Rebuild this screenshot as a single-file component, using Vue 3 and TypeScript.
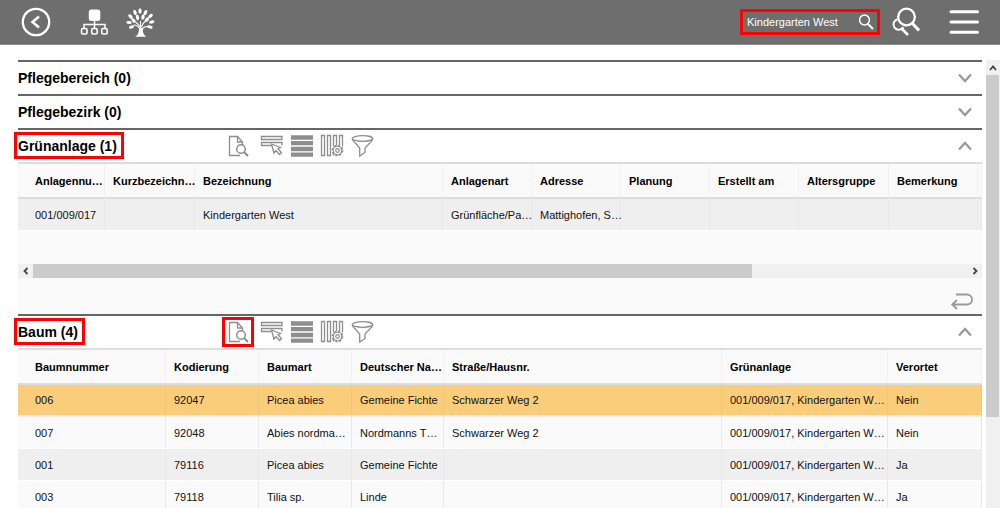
<script setup lang="ts">
import { ref } from 'vue'

interface Column {
  label: string
  width?: number
}
interface Section {
  id: string
  title: string
  count: number
  open: boolean
  marked?: boolean
  markedTool?: boolean
  columns: Column[]
  rows: string[][]
  selected?: number
  scroller?: boolean
}

const query = ref('Kindergarten West')

const sections = ref<Section[]>([
  { id: 'bereich', title: 'Pflegebereich', count: 0, open: false, columns: [], rows: [] },
  { id: 'bezirk', title: 'Pflegebezirk', count: 0, open: false, columns: [], rows: [] },
  {
    id: 'gruenanlage',
    title: 'Grünanlage',
    count: 1,
    open: true,
    marked: true,
    scroller: true,
    columns: [
      { label: 'Anlagennu…', width: 87 },
      { label: 'Kurzbezeichn…', width: 90 },
      { label: 'Bezeichnung' },
      { label: 'Anlagenart', width: 89 },
      { label: 'Adresse', width: 89 },
      { label: 'Planung', width: 89 },
      { label: 'Erstellt am', width: 89 },
      { label: 'Altersgruppe', width: 90 },
      { label: 'Bemerkung', width: 89 },
      { label: '', width: 4 },
    ],
    rows: [['001/009/017', '', 'Kindergarten West', 'Grünfläche/Pa…', 'Mattighofen, S…', '', '', '', '', '']],
  },
  {
    id: 'baum',
    title: 'Baum',
    count: 4,
    open: true,
    marked: true,
    markedTool: true,
    selected: 0,
    columns: [
      { label: 'Baumnummer', width: 148 },
      { label: 'Kodierung', width: 93 },
      { label: 'Baumart', width: 93 },
      { label: 'Deutscher Na…', width: 92 },
      { label: 'Straße/Hausnr.' },
      { label: 'Grünanlage', width: 166 },
      { label: 'Verortet', width: 94 },
    ],
    rows: [
      ['006', '92047', 'Picea abies', 'Gemeine Fichte', 'Schwarzer Weg 2', '001/009/017, Kindergarten W…', 'Nein'],
      ['007', '92048', 'Abies nordma…', 'Nordmanns T…', 'Schwarzer Weg 2', '001/009/017, Kindergarten W…', 'Nein'],
      ['001', '79116', 'Picea abies', 'Gemeine Fichte', '', '001/009/017, Kindergarten W…', 'Ja'],
      ['003', '79118', 'Tilia sp.', 'Linde', '', '001/009/017, Kindergarten W…', 'Ja'],
    ],
  },
])

const tools = [
  { id: 'preview', label: 'Details anzeigen' },
  { id: 'select', label: 'Auswählen' },
  { id: 'rows', label: 'Alle Zeilen' },
  { id: 'columns', label: 'Spalten einstellen' },
  { id: 'filter', label: 'Filtern' },
]

const leaves = [
  [14, 3, 0], [9, 4.5, -20], [19.5, 4.5, 25], [4.5, 8.5, -45], [24.5, 8, 50],
  [11.5, 9.5, -10], [17, 9, 15], [3, 14.5, -85], [7.5, 12.5, -45],
  [21, 11.5, 45], [25.8, 14, 80], [5.5, 19, -105], [24, 19, 100],
]
</script>

<template>
  <div class="app">
    <header class="topbar">
      <button class="icon-button back" aria-label="Zurück">
        <svg width="30" height="30" viewBox="0 0 30 30" fill="none" stroke="currentColor">
          <circle cx="15" cy="15" r="13.2" stroke-width="2.3" />
          <path d="M18 9.5 11.5 15l6.500 5.500" stroke-width="2.6" />
        </svg>
      </button>
      <button class="icon-button org" aria-label="Struktur">
        <svg width="28" height="28" viewBox="0 0 28 28" fill="none" stroke="currentColor">
          <rect x="8.800" y="1.500" width="11.500" height="11.500" rx="2.500" fill="currentColor" stroke="none" />
          <path d="M14.500 12v8M4 20v-3.500h21V20" stroke-width="1.500" />
          <rect x="1.500" y="20.500" width="5.500" height="5.500" rx="1.500" stroke-width="1.600" />
          <rect x="11.700" y="20.500" width="5.500" height="5.500" rx="1.500" stroke-width="1.600" />
          <rect x="21.700" y="20.500" width="5.500" height="5.500" rx="1.500" stroke-width="1.600" />
        </svg>
      </button>
      <button class="icon-button tree" aria-label="Baumkataster">
        <svg width="29" height="29" viewBox="0 0 29 29" fill="currentColor">
          <ellipse v-for="(l, i) in leaves" :key="i" :cx="l[0]" :cy="l[1]" rx="1.600" ry="2.700"
            :transform="`rotate(${l[2]} ${l[0]} ${l[1]})`" />
          <path d="M13 20C13 24 12.500 27 9 28.700h11.500c-3-1.500-3.700-4-3.700-8.700z" />
          <path d="M14.500 23V13M14.500 22.500C13 18.500 10.500 17 7.500 17M13.800 19C12.500 16.500 11 15 9.500 14M15.500 22.500c1-2.800 3.500-4 6.500-4.200M15.500 19c.8-3 2-4.500 4-6"
            fill="none" stroke="currentColor" stroke-width="1.200" />
        </svg>
      </button>

      <form class="search" role="search" @submit.prevent>
        <input v-model="query" type="text" aria-label="Suche" />
        <button class="icon-button" type="submit" aria-label="Suchen">
          <svg width="16" height="16" viewBox="0 0 16 16" fill="none" stroke="currentColor">
            <circle cx="6.500" cy="6" r="4.900" stroke-width="1.500" />
            <path d="m10 10 5 5" stroke-width="1.900" />
          </svg>
        </button>
      </form>
      <button class="icon-button advanced" aria-label="Erweiterte Suche">
        <svg width="30" height="30" viewBox="0 0 30 30" fill="none" stroke="currentColor">
          <circle cx="16.500" cy="10" r="8.300" stroke-width="2.300" />
          <path d="m22 16 7 7.500" stroke-width="3" />
          <path d="M7.500 12.200a5.400 5.400 0 1 0 6 8" stroke-width="2" />
          <path d="m11 21 7 7" stroke-width="2.600" />
        </svg>
      </button>
      <button class="icon-button" aria-label="Menü">
        <svg width="30" height="26" viewBox="0 0 30 26" fill="none" stroke="currentColor">
          <path d="M2 2.800h26.500M2 13h26.500M2 23.200h26.500" stroke-width="3" stroke-linecap="round" />
        </svg>
      </button>
    </header>

    <div class="body">
      <main class="content">
        <section v-for="s in sections" :key="s.id" class="section">
          <div class="section-head">
            <div class="title-cell">
              <h2 :class="{ marked: s.marked }">{{ s.title }} ({{ s.count }})</h2>
            </div>
            <div v-if="s.open" class="tools">
              <button v-for="t in tools" :key="t.id" class="tool" :aria-label="t.label"
                :class="{ marked: s.markedTool && t.id === 'preview' }">
                <svg width="24" height="24" viewBox="0 0 24 24" fill="none" stroke="currentColor" stroke-width="1.300">
                  <template v-if="t.id === 'preview'">
                    <path d="M14 21.500H3.500v-19h8l5 5.500v3M11.500 2.500V8h5" />
                    <circle cx="15" cy="15" r="4.300" fill="#fff" stroke-width="1.500" />
                    <path d="m18 18 4 4" stroke-width="2" />
                  </template>
                  <template v-else-if="t.id === 'select'">
                    <path d="M1.500 2.500h20.500v3h-20.500zM11.500 11.500h-10v-3h20.500v3" />
                    <path d="m11.500 10 2.500 9 2-2.500 3.500 4 2-1.800-3.500-4 2.500-1.200z" fill="#fff" />
                  </template>
                  <template v-else-if="t.id === 'rows'">
                    <path d="M1 3.500h22M1 9.200h22M1 15h22M1 20.700h22" stroke-width="4.300" />
                  </template>
                  <template v-else-if="t.id === 'columns'">
                    <path d="M1.500 1.500h3v20h-3zM7.500 1.500h3v20h-3zM13.500 12.500v-11h3v9.500M19.500 11v-9.500h3v11M13.500 20v1.500" />
                    <circle cx="17.500" cy="16.500" r="4.300" fill="#fff" stroke-width="1.200" />
                    <circle cx="17.500" cy="16.500" r="5" stroke-width="1.700" stroke-dasharray="2 1.930" />
                    <circle cx="17.500" cy="16.500" r="1.800" stroke-width="1.200" />
                  </template>
                  <template v-else>
                    <ellipse cx="12.500" cy="4.500" rx="10.200" ry="2.800" />
                    <path d="M2.300 4.500c0 2 1.200 2.900 3 4.500l4.400 5v8l5.300-3.500v-4.500l5-5.200c1.700-1.500 2.700-2.300 2.700-4.300" />
                  </template>
                </svg>
              </button>
            </div>
            <button class="toggle" :aria-expanded="s.open" :aria-label="s.title" @click="s.open = !s.open">
              <svg width="16" height="12" viewBox="0 0 16 12" fill="none" stroke="currentColor" stroke-width="2.300">
                <path :d="s.open ? 'm2 9.500 6-6.500 6 6.500' : 'm2 2.500 6 6.500 6-6.500'" />
              </svg>
            </button>
          </div>

          <div v-if="s.open" class="panel">
            <table>
              <colgroup>
                <col v-for="(c, i) in s.columns" :key="i" :style="c.width ? { width: c.width + 'px' } : {}" />
              </colgroup>
              <thead>
                <tr>
                  <th v-for="(c, i) in s.columns" :key="i" scope="col">{{ c.label }}</th>
                </tr>
              </thead>
              <tbody>
                <tr v-for="(r, ri) in s.rows" :key="ri" :class="{ selected: s.selected === ri }">
                  <td v-for="(cell, ci) in r" :key="ci">{{ cell }}</td>
                </tr>
              </tbody>
            </table>
            <template v-if="s.scroller">
              <div class="hscroll">
                <button class="arrow" aria-label="Nach links">
                  <svg width="8" height="8" viewBox="0 0 8 8"><path d="M5.500 1 2.500 4l3 3" /></svg>
                </button>
                <div class="htrack"><div class="hthumb"></div></div>
                <button class="arrow" aria-label="Nach rechts">
                  <svg width="8" height="8" viewBox="0 0 8 8"><path d="m2.500 1 3 3-3 3" /></svg>
                </button>
              </div>
              <div class="panel-foot">
                <button class="return" aria-label="Zurücksetzen">
                  <svg width="24" height="18" viewBox="0 0 24 18" fill="none" stroke="currentColor" stroke-width="1.800">
                    <path d="M6 2.500h11a5 5 0 0 1 0 10H3M7 8l-4.800 4.500L7 17" />
                  </svg>
                </button>
              </div>
            </template>
          </div>
        </section>
      </main>

      <div class="vscroll">
        <button class="arrow" aria-label="Nach oben">
          <svg width="8" height="8" viewBox="0 0 8 8"><path d="m1 6 3-3.500L7 6" /></svg>
        </button>
        <div class="vtrack"><div class="vthumb"></div></div>
      </div>
    </div>
  </div>
</template>

<style>
body {
  margin: 0;
  background: #fff;
}
</style>

<style scoped>
.app {
  display: flex;
  flex-direction: column;
  height: 100vh;
  overflow: hidden;
  font-family: "Liberation Sans", Arial, sans-serif;
  font-size: 11px;
  color: #111;
}
.app * {
  box-sizing: border-box;
}
button {
  display: flex;
  align-items: center;
  justify-content: center;
  padding: 0;
  border: 0;
  background: none;
  color: inherit;
  cursor: pointer;
}
svg {
  display: block;
  flex: none;
}

.topbar {
  display: flex;
  align-items: center;
  flex: none;
  height: 45px;
  padding: 0 21px;
  background: #6e6e6e;
  border-bottom: 1px solid #8c8c8c;
  color: #fff;
}
.org {
  margin-left: 29px;
}
.tree {
  margin-left: 18px;
}
.search {
  display: flex;
  align-items: center;
  width: 140px;
  height: 26px;
  margin-left: auto;
  padding: 0 3px 0 4px;
  border: 3px solid #f00;
}
.search input {
  flex: 1;
  min-width: 0;
  padding: 0;
  border: 0;
  outline: 0;
  background: none;
  color: #fff;
  font: inherit;
}
.advanced {
  margin: 0 29px 0 10px;
}

.body {
  display: flex;
  flex: 1;
  min-height: 0;
  padding: 15px 0 0 18px;
}
.content {
  flex: 1;
  min-width: 0;
  overflow: hidden;
  margin-left: -8px;
  padding-left: 8px;
}
.section {
  border-top: 2px solid #666;
}
.section-head {
  display: flex;
  align-items: center;
  height: 32px;
}
.title-cell {
  width: 204px;
}
h2 {
  position: relative;
  display: inline-block;
  margin: 0;
  font-size: 14px;
  line-height: 16px;
  white-space: nowrap;
  color: #000;
}
.marked::after {
  content: "";
  position: absolute;
  inset: -6px -7px -5px -4px;
  border: 3px solid #f00;
}
.tools {
  display: flex;
  color: #8e8e8e;
}
.tool {
  position: relative;
  width: 30px;
  height: 30px;
}
.tool:first-child {
  width: 32px;
  margin-right: 3px;
}
.tool.marked::after {
  inset: 0;
}
.toggle {
  width: 34px;
  height: 32px;
  margin-left: auto;
  color: #999;
}

.panel {
  border-top: 2px solid #ddd;
  background: #fafafa;
}
table {
  width: 100%;
  table-layout: fixed;
  border-collapse: separate;
  border-spacing: 0;
}
th,
td {
  padding: 0 0 0 8px;
  border-right: 1px solid #e9e9e9;
  text-align: left;
  white-space: nowrap;
}
th:first-child,
td:first-child {
  padding-left: 17px;
}
th {
  height: 35px;
  border-right-color: #f1f1f1;
  border-bottom: 2px solid #ddd;
  color: #000;
}
td {
  height: 32px;
  border-bottom: 1px solid #fff;
}
tbody tr:nth-child(odd) {
  background: #efefef;
}
tbody tr.selected {
  background: #facd7b;
}
.selected td {
  border-right-color: #f0c679;
  border-bottom: 2px solid #ececec;
}

.hscroll {
  display: flex;
  height: 14px;
  margin-top: 33px;
  background: #f0f0f0;
}
.arrow {
  flex: none;
  width: 15px;
  height: 14px;
}
.arrow path {
  fill: none;
  stroke: #444;
  stroke-width: 1.800;
}
.htrack {
  flex: 1;
}
.hthumb {
  width: 77%;
  height: 100%;
  background: #cbcbcb;
}
.panel-foot {
  display: flex;
  align-items: center;
  justify-content: flex-end;
  height: 36px;
  padding: 10px 8px 0 0;
}
.return {
  color: #999;
}

.vscroll {
  display: flex;
  flex-direction: column;
  flex: none;
  width: 14px;
  margin-left: 4px;
  background: #f0f0f0;
}
.vscroll .arrow {
  width: 13px;
  height: 15px;
}
.vtrack {
  flex: 1;
}
.vthumb {
  width: 13px;
  height: 79%;
  background: #cbcbcb;
}
</style>
